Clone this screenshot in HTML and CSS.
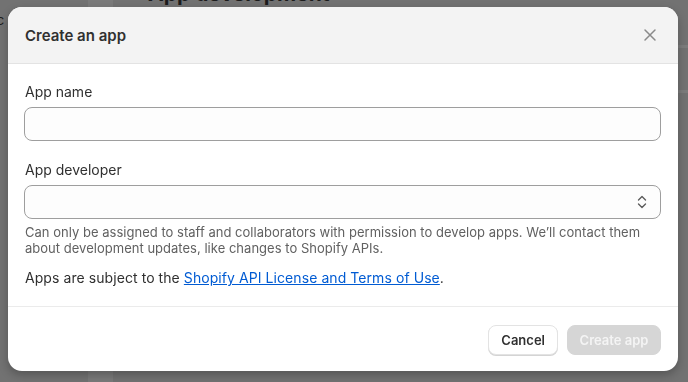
FILE: index.html
```html
<!DOCTYPE html>
<html lang="en">
<head>
    <meta charset="UTF-8">
    <meta name="viewport" content="width=device-width, initial-scale=1.0">
    <title>Create an app</title>
    <link rel="stylesheet" href="styles.css">
</head>
<body>

    <!-- page behind the modal -->
    <div class="page">
        <div class="page-side">
            <span class="side-text">Misc</span>
        </div>
        <div class="page-main">
            <h1 class="page-title"><span class="back">&middot;</span>App development</h1>
            <div class="page-rule"></div>
            <div class="page-rule second"></div>
        </div>
    </div>

    <div class="backdrop">
        <div class="modal">

            <div class="modal-header">
                <h2>Create an app</h2>
                <button class="close-btn" aria-label="Close">
                    <svg width="20" height="20" viewBox="0 0 20 20">
                        <path d="M5 5l10 10M15 5l-10 10" stroke="#8a8a8a" stroke-width="1.5" stroke-linecap="round" fill="none"/>
                    </svg>
                </button>
            </div>

            <div class="modal-body">
                <div class="field">
                    <label for="app-name">App name</label>
                    <input type="text" id="app-name">
                </div>

                <div class="field">
                    <label for="app-dev">App developer</label>
                    <div class="select">
                        <span class="select-value"></span>
                        <svg width="12" height="14" viewBox="0 0 12 14">
                            <path d="M2.5 5l3.5-3.5 3.5 3.5M2.5 9l3.5 3.5 3.5-3.5" stroke="#5c5c5c" stroke-width="1.4" stroke-linecap="round" stroke-linejoin="round" fill="none"/>
                        </svg>
                    </div>
                    <p class="help">Can only be assigned to staff and collaborators with permission to develop apps. We’ll contact them about development updates, like changes to Shopify APIs.</p>
                </div>

                <p class="terms">Apps are subject to the <a href="#">Shopify API License and Terms of Use</a>.</p>
            </div>

            <div class="modal-footer">
                <button class="btn">Cancel</button>
                <button class="btn primary" disabled>Create app</button>
            </div>

        </div>
    </div>

</body>
</html>
```

FILE: styles.css
```css
body {
    margin: 0;
    font-family: Inter, "Noto Sans", sans-serif;
    background-color: #727272;
    color: #303030;
    height: 382px;
    overflow: hidden;
}

/* page behind */
.page {
    display: flex;
    height: 382px;
}

.page-side {
    width: 88px;
    flex-shrink: 0;
}

.side-text {
    display: block;
    margin: 12px 0 0 -25px;
    font-size: 13px;
    color: #1e1e1e;
}

.page-main {
    flex: 1;
    border-left: 25px solid #7a7a7a;
    height: 382px;
}

.page-title {
    margin: -19px 0 0 10px;
    font-size: 21px;
    font-weight: 700;
    color: #1c1c1c;
    line-height: 26px;
}

.back {
    display: inline-block;
    width: 25px;
}

.page-rule {
    margin-top: 38px;
    height: 3px;
    background-color: #7c7c7c;
}

.page-rule.second {
    margin-top: 42px;
}

/* modal */
.backdrop {
    position: fixed;
    inset: 0;
    padding: 7px 10px 0 8px;
}

.modal {
    width: 670px;
    height: 364px;
    background-color: white;
    border-radius: 14px;
    box-shadow: 0 4px 10px rgba(0, 0, 0, 0.25);
    overflow: hidden;
    display: flex;
    flex-direction: column;
}

.modal-header {
    height: 56px;
    background-color: #f3f3f3;
    border-bottom: 1px solid #e3e3e3;
    display: flex;
    align-items: center;
    justify-content: space-between;
    padding: 0 18px 0 17px;
}

.modal-header h2 {
    margin: 0;
    font-size: 15px;
    font-weight: 600;
    color: #303030;
}

.close-btn {
    border: none;
    background: none;
    padding: 0;
    width: 20px;
    height: 20px;
    cursor: pointer;
}

.modal-body {
    padding: 18px 17px 18px 16px;
    border-bottom: 1px solid #ebebeb;
}

.field {
    margin-bottom: 19px;
}

label {
    display: block;
    font-size: 14px;
    line-height: 20px;
    margin-bottom: 5px;
    padding-left: 1px;
}

input,
.select {
    display: block;
    box-sizing: border-box;
    width: 100%;
    height: 34px;
    border: 1px solid #9e9e9e;
    border-radius: 8px;
    background-color: #fdfdfd;
    font-family: inherit;
    font-size: 14px;
    margin: 0;
}

.select {
    display: flex;
    align-items: center;
    justify-content: space-between;
    padding: 0 12px 0 12px;
}

.help {
    margin: 5px 0 0 1px;
    font-size: 13px;
    line-height: 16px;
    color: #616161;
    letter-spacing: 0.02px;
}

.terms {
    margin: -7px 0 0 1px;
    font-size: 14px;
    line-height: 20px;
    letter-spacing: 0.07px;
}

.terms a {
    color: #005bd3;
    text-decoration: underline;
}

.modal-footer {
    display: flex;
    justify-content: flex-end;
    gap: 9px;
    padding: 18px 17px 16px;
}

.btn {
    height: 30px;
    padding: 0 12px;
    border-radius: 8px;
    font-family: inherit;
    font-size: 13px;
    font-weight: 600;
    color: #303030;
    background-color: white;
    border: 1px solid #e3e3e3;
    box-shadow: 0 1px 0 #d4d4d4;
    white-space: nowrap;
    cursor: pointer;
}

.btn.primary {
    background-color: #d6d6d6;
    border-color: #d6d6d6;
    color: #f4f4f4;
    box-shadow: none;
    width: 94px;
    padding: 0;
}
```
